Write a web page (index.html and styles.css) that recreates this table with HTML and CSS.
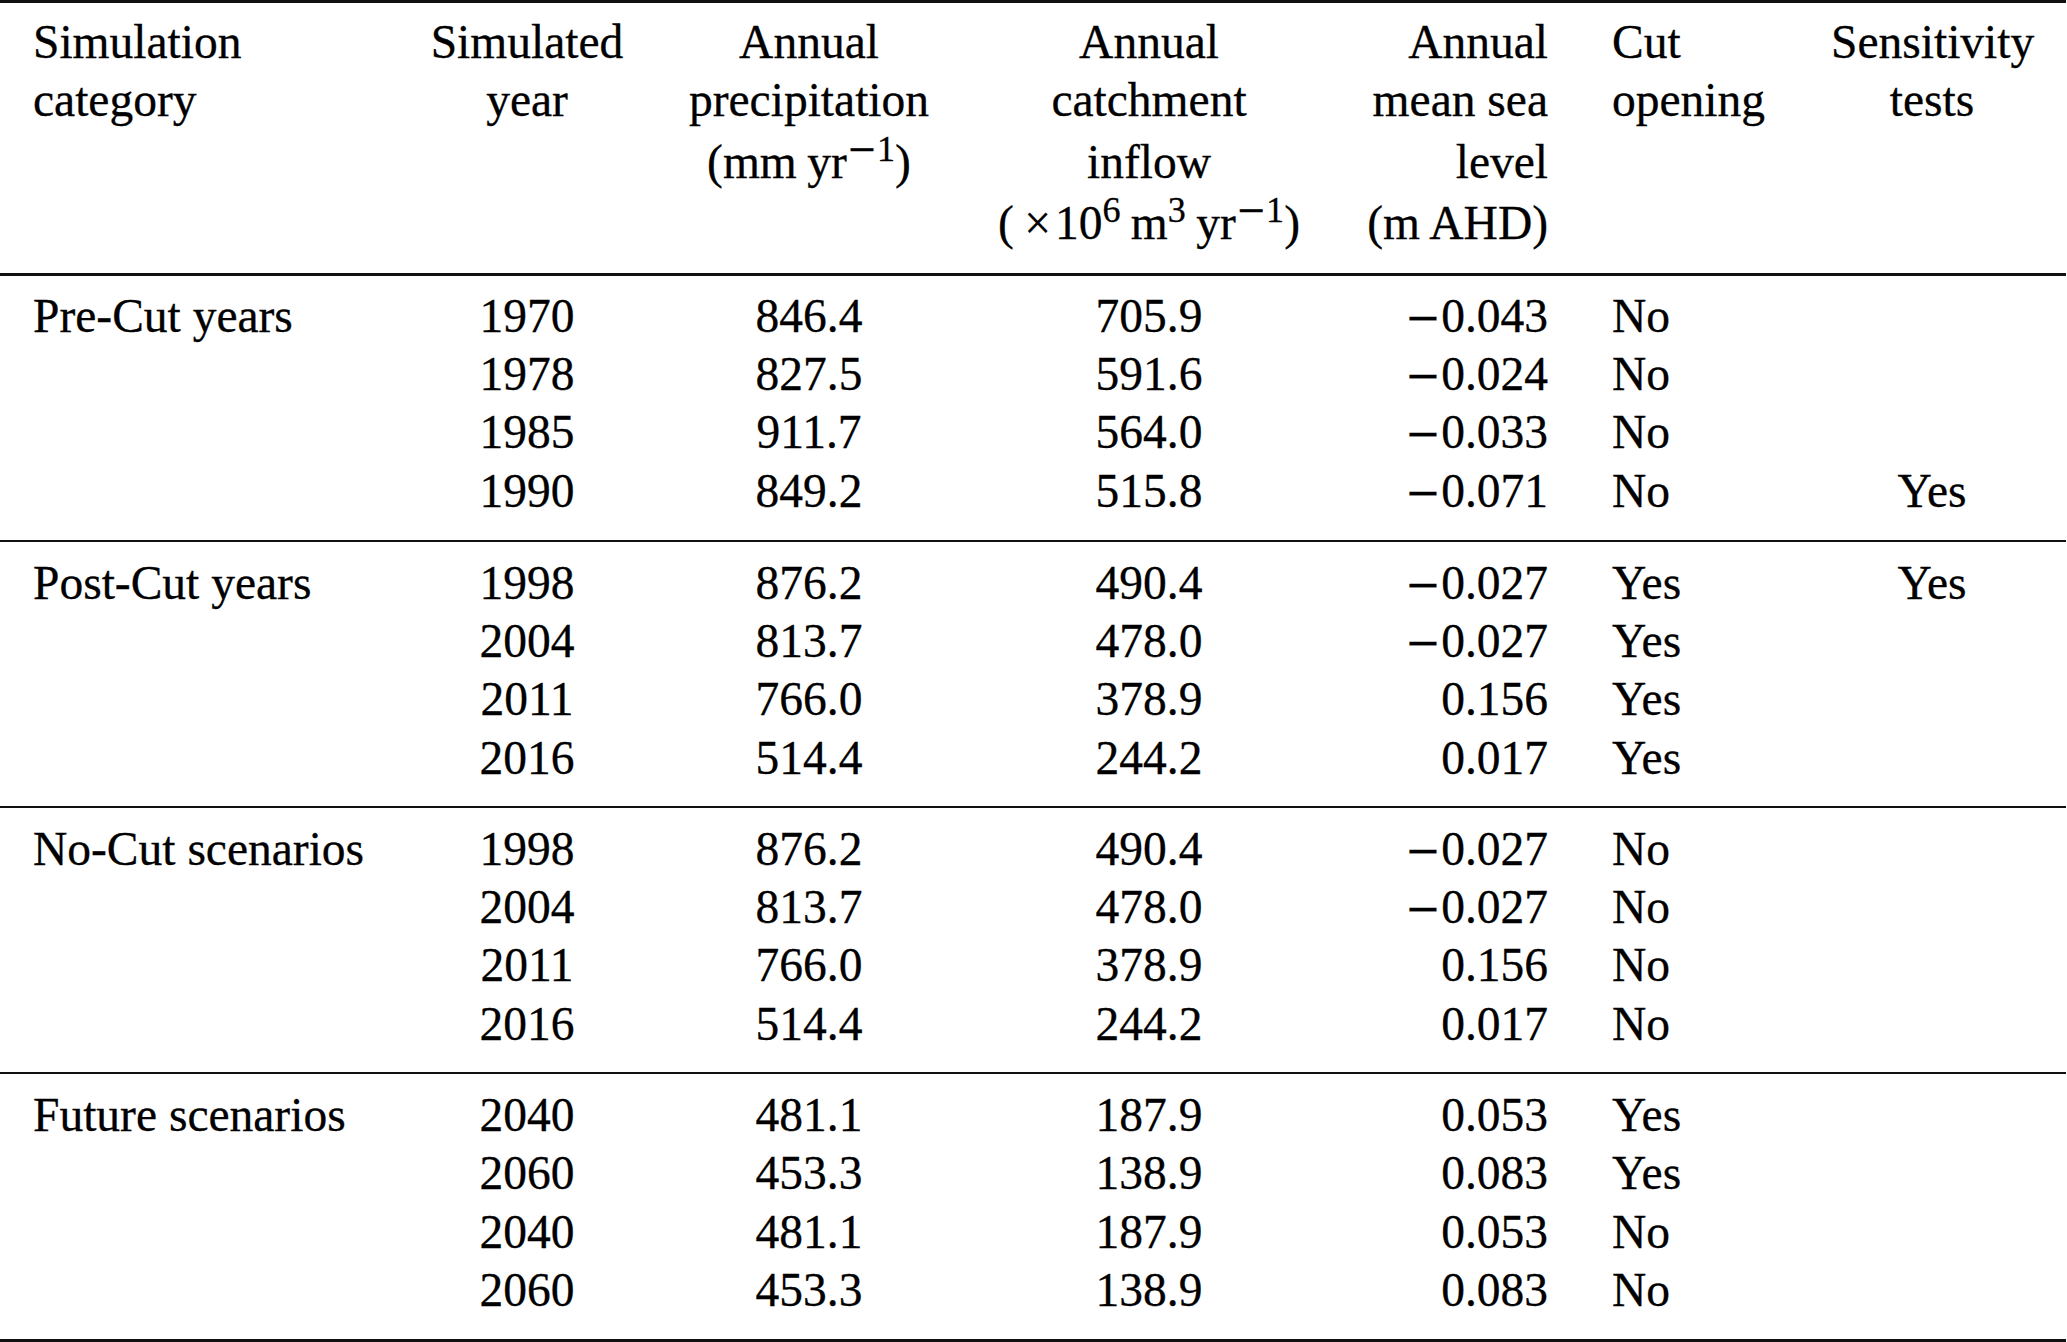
FILE: index.html
```html
<!DOCTYPE html>
<html lang="en">
<head>
<meta charset="utf-8">
<title>Simulation table</title>
<link rel="stylesheet" href="styles.css">
</head>
<body>
<table class="tbl">
  <colgroup>
    <col class="w1"><col class="w2"><col class="w3"><col class="w4"><col class="w5"><col class="w6"><col class="w7">
  </colgroup>
  <thead>
    <tr class="hrow-first">
      <th>Simulation</th><th>Simulated</th><th>Annual</th><th>Annual</th><th>Annual</th><th>Cut</th><th>Sensitivity</th>
    </tr>
    <tr>
      <th>category</th><th>year</th><th>precipitation</th><th>catchment</th><th>mean sea</th><th>opening</th><th>tests</th>
    </tr>
    <tr class="hrow-sup">
      <th></th><th></th><th>(mm<span class="th"></span>yr<span class="sup"><span class="mi">−</span>1</span>)</th><th>inflow</th><th>level</th><th></th><th></th>
    </tr>
    <tr class="hrow-sup hrow-last">
      <th></th><th></th><th></th><th>(<span class="x">×</span>10<span class="sup">6</span><span class="th"></span>m<span class="sup">3</span><span class="th"></span>yr<span class="sup"><span class="mi">−</span>1</span>)</th><th>(m AHD)</th><th></th><th></th>
    </tr>
  </thead>
  <tbody class="grp grp-first">
    <tr><td>Pre-Cut years</td><td>1970</td><td>846.4</td><td>705.9</td><td><span class="neg">−</span>0.043</td><td>No</td><td></td></tr>
    <tr><td></td><td>1978</td><td>827.5</td><td>591.6</td><td><span class="neg">−</span>0.024</td><td>No</td><td></td></tr>
    <tr><td></td><td>1985</td><td>911.7</td><td>564.0</td><td><span class="neg">−</span>0.033</td><td>No</td><td></td></tr>
    <tr><td></td><td>1990</td><td>849.2</td><td>515.8</td><td><span class="neg">−</span>0.071</td><td>No</td><td>Yes</td></tr>
  </tbody>
  <tbody class="grp">
    <tr><td>Post-Cut years</td><td>1998</td><td>876.2</td><td>490.4</td><td><span class="neg">−</span>0.027</td><td>Yes</td><td>Yes</td></tr>
    <tr><td></td><td>2004</td><td>813.7</td><td>478.0</td><td><span class="neg">−</span>0.027</td><td>Yes</td><td></td></tr>
    <tr><td></td><td>2011</td><td>766.0</td><td>378.9</td><td>0.156</td><td>Yes</td><td></td></tr>
    <tr><td></td><td>2016</td><td>514.4</td><td>244.2</td><td>0.017</td><td>Yes</td><td></td></tr>
  </tbody>
  <tbody class="grp">
    <tr><td>No-Cut scenarios</td><td>1998</td><td>876.2</td><td>490.4</td><td><span class="neg">−</span>0.027</td><td>No</td><td></td></tr>
    <tr><td></td><td>2004</td><td>813.7</td><td>478.0</td><td><span class="neg">−</span>0.027</td><td>No</td><td></td></tr>
    <tr><td></td><td>2011</td><td>766.0</td><td>378.9</td><td>0.156</td><td>No</td><td></td></tr>
    <tr><td></td><td>2016</td><td>514.4</td><td>244.2</td><td>0.017</td><td>No</td><td></td></tr>
  </tbody>
  <tbody class="grp grp-last">
    <tr><td>Future scenarios</td><td>2040</td><td>481.1</td><td>187.9</td><td>0.053</td><td>Yes</td><td></td></tr>
    <tr><td></td><td>2060</td><td>453.3</td><td>138.9</td><td>0.083</td><td>Yes</td><td></td></tr>
    <tr><td></td><td>2040</td><td>481.1</td><td>187.9</td><td>0.053</td><td>No</td><td></td></tr>
    <tr><td></td><td>2060</td><td>453.3</td><td>138.9</td><td>0.083</td><td>No</td><td></td></tr>
  </tbody>
</table>
</body>
</html>
```
FILE: styles.css
```css
html, body {
  margin: 0;
  padding: 0;
  background: #ffffff;
  overflow: hidden;
}

body {
  font-family: "Liberation Serif", "Times New Roman", serif;
  font-size: 47.5px;
  color: #000000;
  -webkit-text-stroke: 0.3px #000000;
}

.tbl {
  width: 2066px;
  table-layout: fixed;
  border-collapse: separate;
  border-spacing: 0;
}

.w1 { width: 398px; }
.w2 { width: 258px; }
.w3 { width: 306px; }
.w4 { width: 374px; }
.w5 { width: 245px; }
.w6 { width: 250px; }
.w7 { width: 235px; }

.tbl th,
.tbl td {
  padding: 0;
  font-weight: normal;
  line-height: 58.33px;
  white-space: nowrap;
  vertical-align: top;
  border-color: #111111;
  border-style: solid;
  border-width: 0;
}

.tbl tr > :nth-child(1) { text-align: left; padding-left: 33px; }
.tbl tr > :nth-child(2) { text-align: center; }
.tbl tr > :nth-child(3) { text-align: center; }
.tbl tr > :nth-child(4) { text-align: center; }
.tbl tr > :nth-child(5) { text-align: right; padding-right: 33px; }
.tbl tr > :nth-child(6) { text-align: left; padding-left: 31px; }
.tbl tr > :nth-child(7) { text-align: center; padding-right: 33px; }

/* header rows */
.hrow-first > th {
  border-top-width: 3px;
  padding-top: 10.1px;
}
.hrow-sup > th {
  padding-top: 3px;
}
.hrow-last > th {
  padding-bottom: 20.6px;
}

/* body groups */
.grp > tr:first-child > td {
  border-top-width: 2px;
  padding-top: 11.6px;
}
.grp > tr:last-child > td {
  padding-bottom: 19.3px;
}
.grp-first > tr:first-child > td {
  border-top-width: 3px;
  padding-top: 10.6px;
}
.grp-first > tr:last-child > td {
  padding-bottom: 20.1px;
}
.grp-last > tr:last-child > td {
  border-bottom-width: 3px;
}

/* inline math bits */
.sup {
  font-size: 0.76em;
  position: relative;
  top: -0.47em;
  line-height: 0;
}
.mi {
  font-family: "DejaVu Serif", serif;
  line-height: 0;
}
.neg {
  font-family: "DejaVu Serif", serif;
  font-size: 0.9em;
  line-height: 0;
}
.th {
  display: inline-block;
  width: 0.22em;
}
.x {
  margin: 0 0.08em 0 0.22em;
}
```
